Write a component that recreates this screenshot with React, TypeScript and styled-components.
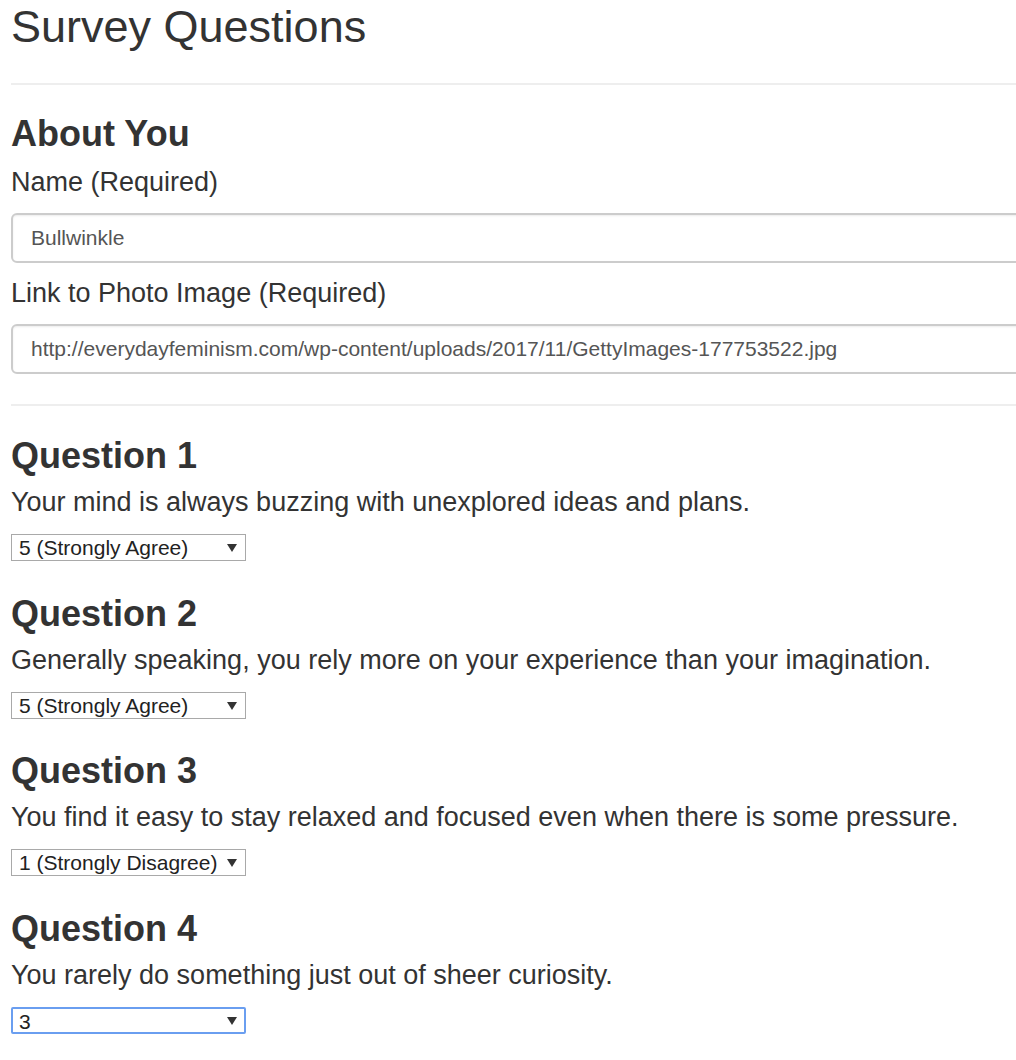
import React from "react";
import styled, { createGlobalStyle } from "styled-components";

const Global = createGlobalStyle`
  html, body {
    margin: 0;
    padding: 0;
    background: #ffffff;
    overflow: hidden;
  }
  body {
    font-family: "Liberation Sans", Arial, Helvetica, sans-serif;
    color: #333333;
  }
  * { box-sizing: border-box; }
`;

const Viewport = styled.div`
  width: 100vw;
  overflow: hidden;
`;

const Page = styled.main`
  width: 1400px;
  padding: 0 0 40px 11px;
  display: flex;
  flex-direction: column;
  align-items: flex-start;
`;

const Title = styled.h1`
  margin: 0;
  font-size: 45px;
  line-height: 54px;
  font-weight: 400;
  color: #333333;
`;

const Rule = styled.hr<{ $top: number }>`
  align-self: stretch;
  margin: ${(p) => p.$top}px 0 0 0;
  height: 2px;
  border: 0;
  background: #eeeeee;
`;

const Heading = styled.h3<{ $top: number }>`
  margin: ${(p) => p.$top}px 0 0 0;
  font-size: 36px;
  line-height: 40px;
  font-weight: 700;
  color: #333333;
`;

const Label = styled.label<{ $top: number }>`
  display: block;
  margin: ${(p) => p.$top}px 0 0 0;
  font-size: 27px;
  line-height: 36px;
  font-weight: 400;
  color: #333333;
`;

const TextInput = styled.input`
  display: block;
  align-self: stretch;
  margin-top: 13px;
  height: 50px;
  padding: 0 18px;
  font-family: "Liberation Sans", Arial, Helvetica, sans-serif;
  font-size: 21px;
  color: #555555;
  background: #ffffff;
  border: 2px solid #cccccc;
  border-radius: 6px;
  box-shadow: inset 0 1px 2px rgba(0, 0, 0, 0.075);
  outline: none;
`;

const SelectWrap = styled.div`
  position: relative;
  margin-top: 14px;
  width: 235px;
  height: 27px;
`;

const Select = styled.select<{ $focused?: boolean }>`
  appearance: none;
  -webkit-appearance: none;
  display: block;
  width: 100%;
  height: 100%;
  margin: 0;
  padding: 0 0 0 ${(p) => (p.$focused ? 6 : 7)}px;
  font-family: "Liberation Sans", Arial, Helvetica, sans-serif;
  font-size: 21px;
  line-height: 25px;
  color: #222222;
  background: #ffffff;
  border: ${(p) => (p.$focused ? "2px solid #6a9ef0" : "1px solid #a9a9a9")};
  border-radius: ${(p) => (p.$focused ? "2px" : "0")};
  outline: none;
`;

const Arrow = styled.svg`
  position: absolute;
  right: 9px;
  top: 10px;
  width: 10px;
  height: 8px;
  pointer-events: none;
`;

const options = [
  "1 (Strongly Disagree)",
  "2",
  "3",
  "4",
  "5 (Strongly Agree)",
];

const questions = [
  { q: "Your mind is always buzzing with unexplored ideas and plans.", v: "5 (Strongly Agree)" },
  { q: "Generally speaking, you rely more on your experience than your imagination.", v: "5 (Strongly Agree)" },
  { q: "You find it easy to stay relaxed and focused even when there is some pressure.", v: "1 (Strongly Disagree)" },
  { q: "You rarely do something just out of sheer curiosity.", v: "3", focused: true },
];

export default function App() {
  return (
    <Viewport>
      <Global />
      <Page>
        <Title>Survey Questions</Title>
        <Rule $top={29} />
        <Heading $top={29}>About You</Heading>
        <Label $top={10} htmlFor="name">Name (Required)</Label>
        <TextInput id="name" type="text" defaultValue="Bullwinkle" />
        <Label $top={12} htmlFor="photo">Link to Photo Image (Required)</Label>
        <TextInput
          id="photo"
          type="text"
          defaultValue="http://everydayfeminism.com/wp-content/uploads/2017/11/GettyImages-177753522.jpg"
        />
        <Rule $top={30} />
        {questions.map((item, i) => (
          <React.Fragment key={i}>
            <Heading $top={i === 0 ? 30 : 32.5}>Question {i + 1}</Heading>
            <Label $top={8} htmlFor={`q${i + 1}`}>{item.q}</Label>
            <SelectWrap>
              <Select id={`q${i + 1}`} defaultValue={item.v} $focused={item.focused}>
                {options.map((o) => (
                  <option key={o} value={o}>{o}</option>
                ))}
              </Select>
              <Arrow viewBox="0 0 10 8" aria-hidden="true">
                <polygon points="0,0 10,0 5,8" fill="#333333" />
              </Arrow>
            </SelectWrap>
          </React.Fragment>
        ))}
      </Page>
    </Viewport>
  );
}
